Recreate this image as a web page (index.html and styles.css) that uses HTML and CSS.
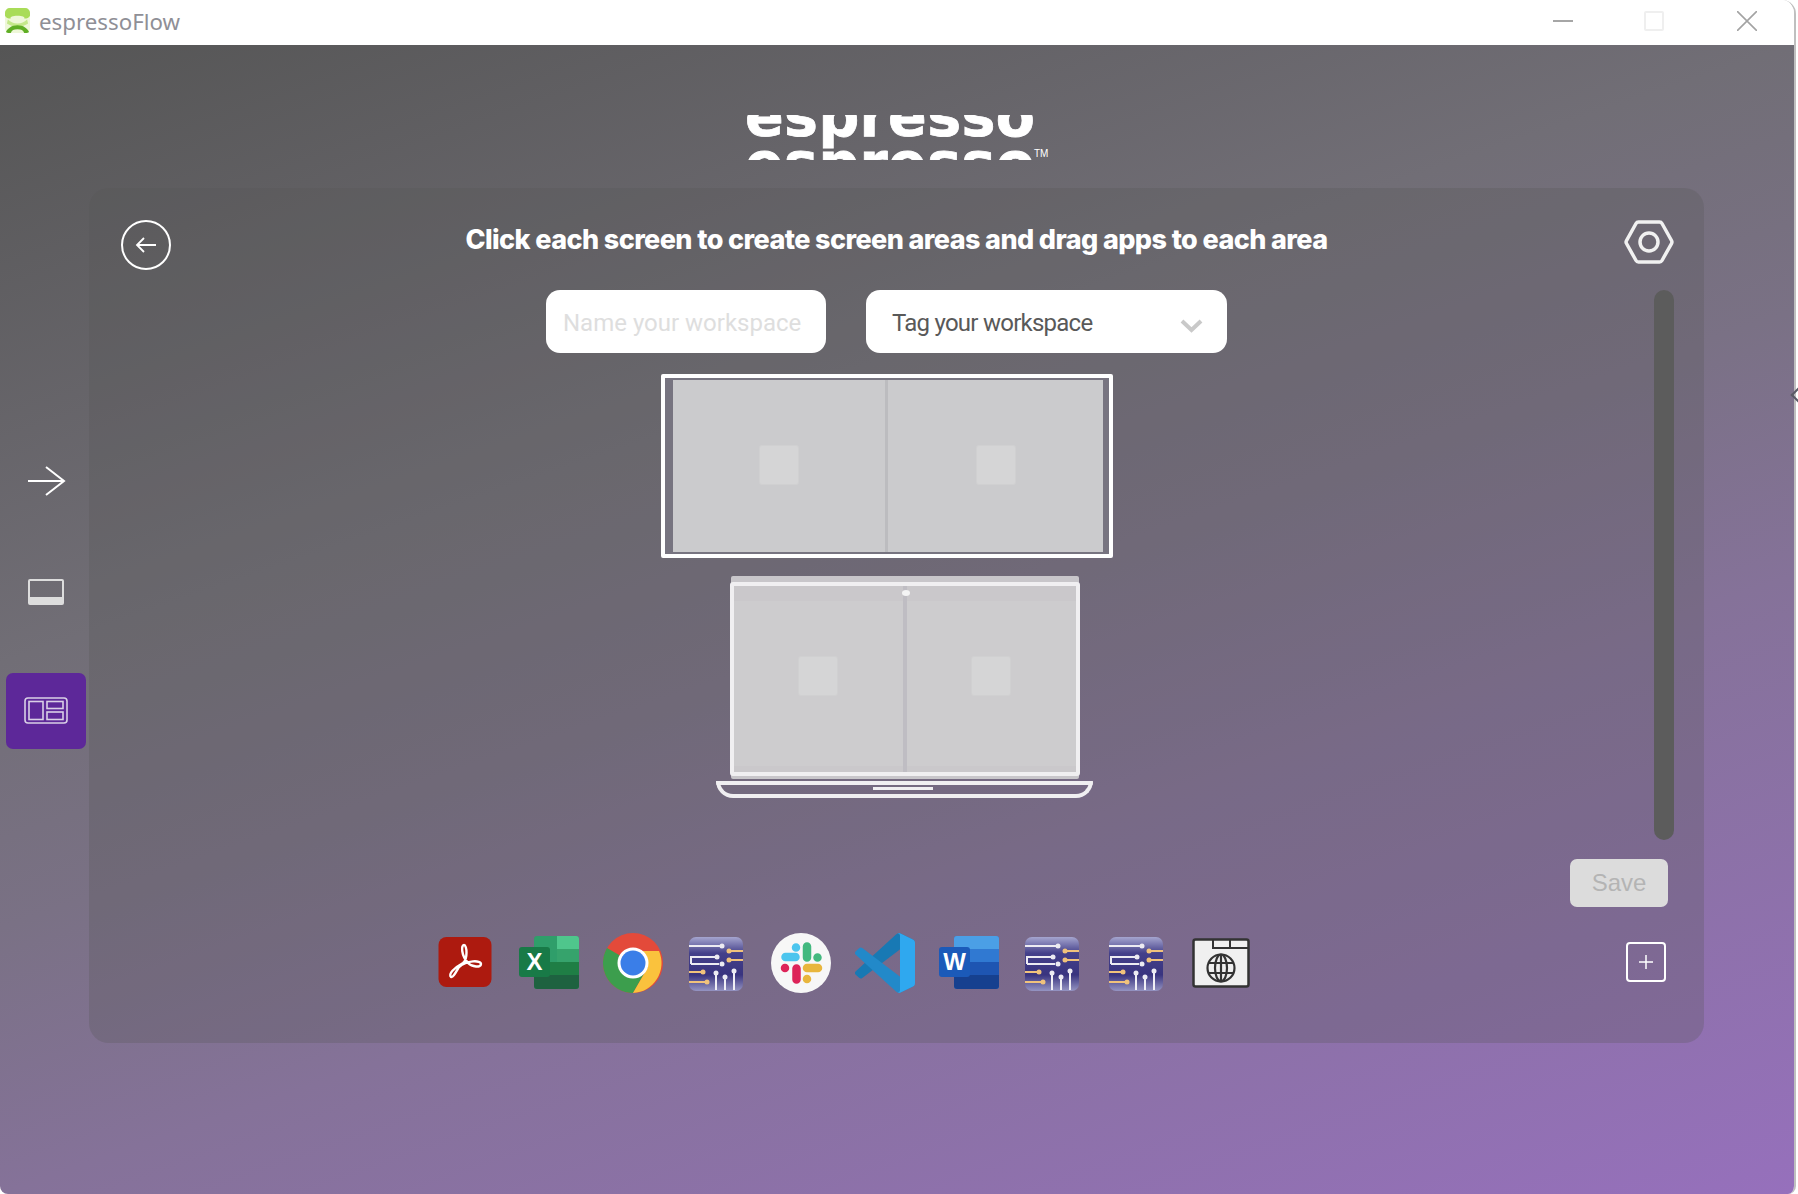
FILE: index.html
```html
<!DOCTYPE html>
<html lang="en">
<head>
  <meta charset="UTF-8">
  <title>espressoFlow</title>
  <link rel="stylesheet" href="styles.css">
</head>
<body>
  <svg class="defs" width="0" height="0">
    <defs>
      <linearGradient id="chipBg" x1="0" y1="0" x2="0" y2="1">
        <stop offset="0" stop-color="#a5a5cf"/>
        <stop offset=".3" stop-color="#44408a"/>
        <stop offset=".7" stop-color="#39347f"/>
        <stop offset="1" stop-color="#9594c2"/>
      </linearGradient>
      <symbol id="chip" viewBox="-1 -3 60 60">
        <rect x="1" y="1" width="54" height="54" rx="7" fill="url(#chipBg)"/>
        <g fill="none" stroke-width="2">
          <path d="M1 10h33M3 28v-7h26M3 28h28" stroke="#ecebf2"/>
          <path d="M41 15h14M41 24h14M1 36h14M1 46h18" stroke="#f0c27c"/>
          <path d="M28 54V37M37 54V41M46 54V35" stroke="#f1f0f5"/>
        </g>
        <g fill="#ecebf2">
          <circle cx="34" cy="10" r="2.500"/><circle cx="29" cy="21" r="2.500"/><circle cx="34" cy="28" r="2.500"/>
          <circle cx="28" cy="37" r="2.500"/><circle cx="37" cy="41" r="2.500"/><circle cx="46" cy="35" r="2.500"/>
        </g>
        <g fill="#f0c27c">
          <circle cx="41" cy="15" r="2.500"/><circle cx="41" cy="24" r="2.500"/><circle cx="15" cy="36" r="2.500"/><circle cx="19" cy="46" r="2.500"/>
        </g>
      </symbol>
    </defs>
  </svg>

  <div class="window">
    <header class="titlebar">
      <div class="app-name">
        <svg class="app-logo" viewBox="0 0 26 26">
          <rect x="0" y="0" width="26" height="26" rx="5" fill="#eef7d8"/>
          <path d="M0 5a5 5 0 0 1 5-5h16a5 5 0 0 1 5 5v3c-1 2-3 3-6 3 1-2-2-3-7-3s-8 1-7 3c-3 0-5-1-6-3z" fill="#a9dc58"/>
          <path d="M3 12c3 3 6 4 10 4s7-1 10-4l1 4c-3 2-6 3-11 3S5 18 2 16z" fill="#c4e88a"/>
          <path d="M1 25c2-4 6-7 12-7s10 3 12 7c-1 1-2 1-3 1h-2c-1-3-3-4-7-4s-6 1-7 4H4c-1 0-2 0-3-1z" fill="#5fae24"/>
        </svg>
        <span>espressoFlow</span>
      </div>
      <div class="win-controls">
        <span class="win-min"></span>
        <span class="win-max"></span>
        <svg class="win-close" viewBox="0 0 20 20"><path d="M0 0l20 20M20 0L0 20" stroke="#a3a3a3" stroke-width="1.600"/></svg>
      </div>
    </header>

    <main class="content">
      <div class="logo">
        <div class="logo-clip"><div class="logo-lines">espresso<br>espresso</div></div>
        <span class="logo-tm">TM</span>
      </div>

      <div class="work-row">
        <nav class="sidebar">
          <button class="side-btn side-arrow">
            <svg width="40" height="30" viewBox="0 0 40 30"><path d="M1 15h36M19 1l18 14-18 14" fill="none" stroke="#fff" stroke-width="2"/></svg>
          </button>
          <button class="side-btn side-screen">
            <svg width="36" height="26" viewBox="0 0 36 26"><rect x="1" y="1" width="34" height="24" rx="1" fill="none" stroke="#ddd" stroke-width="2"/><rect x="1" y="18" width="34" height="7" fill="#ddd"/></svg>
          </button>
          <button class="side-btn side-layout">
            <svg width="44" height="28" viewBox="0 0 44 28"><g fill="none" stroke="#d9cfe6" stroke-width="1.600"><rect x="1" y="1" width="42" height="25" rx="3"/><rect x="5" y="4.500" width="14" height="18"/><rect x="23" y="4.500" width="16" height="7"/><rect x="23" y="15" width="16" height="7.500"/></g></svg>
          </button>
        </nav>

        <section class="panel">
          <div class="panel-head">
            <button class="back-btn">
              <svg width="22" height="16" viewBox="0 0 22 16"><path d="M21 8H2M9 1L2 8l7 7" fill="none" stroke="#fff" stroke-width="1.800"/></svg>
            </button>
            <h1>Click each screen to create screen areas and drag apps to each area</h1>
            <svg class="hex-btn" viewBox="0 0 50 44"><path d="M15 2h20a3 3 0 0 1 3 1.500l9.500 17a3 3 0 0 1 0 3L38 40.500a3 3 0 0 1-3 1.500H15a3 3 0 0 1-3-1.500L2.500 23.500a3 3 0 0 1 0-3L12 3.500A3 3 0 0 1 15 2z" fill="none" stroke="#f1f1f1" stroke-width="3.500"/><circle cx="25" cy="22" r="9" fill="none" stroke="#f1f1f1" stroke-width="3.500"/></svg>
          </div>

          <div class="panel-body">
            <div class="stage">
              <div class="form-row">
                <div class="field field-name">Name your workspace</div>
                <div class="field field-tag">
                  <span>Tag your workspace</span>
                  <svg width="23" height="14" viewBox="0 0 23 14"><path d="M2 2l9.500 9L21 2" fill="none" stroke="#c9c9c9" stroke-width="4"/></svg>
                </div>
              </div>

              <div class="monitor">
                <div class="area"><span class="drop"></span></div>
                <div class="area"><span class="drop"></span></div>
              </div>

              <div class="laptop">
                <div class="lap-screen">
                  <div class="area"><span class="drop"></span></div>
                  <div class="area"><span class="drop"></span></div>
                  <span class="lap-cam"></span>
                </div>
                <div class="lap-base"><span class="lap-notch"></span></div>
              </div>
            </div>
            <div class="scrollbar"></div>
          </div>

          <div class="save-row"><button class="save-btn">Save</button></div>

          <div class="dock">
            <div class="dock-icons">
              <svg class="app" viewBox="0 0 60 60">
                <rect x="3.500" y="4" width="53" height="50" rx="8" fill="#ad1a0f"/>
                <path d="M16 44c-3-3 3-9 12-14 5-4 4-18 1-18s-3 10 4 18c4 4 13 5 13 1s-14-4-22 3c-3 5-6 11-8 10z" fill="none" stroke="#fff" stroke-width="2.400"/>
              </svg>
              <svg class="app" viewBox="0 0 60 56">
                <rect x="15" y="1" width="45" height="53" rx="3" fill="#2f9e6a"/>
                <path d="M38 1h19a3 3 0 0 1 3 3v10H38z" fill="#4fc68c"/>
                <rect x="38" y="14" width="22" height="13" fill="#36a36c"/>
                <rect x="15" y="27" width="45" height="13" fill="#1f7e45"/>
                <path d="M15 40h45v11a3 3 0 0 1-3 3H18a3 3 0 0 1-3-3z" fill="#1e6240"/>
                <rect x="0" y="12" width="31" height="30" rx="3" fill="#187a47"/>
                <text x="15.500" y="35" class="app-letter" text-anchor="middle">X</text>
              </svg>
              <svg class="app" viewBox="0 0 60 60">
                <circle cx="30" cy="30" r="30" fill="#e34a3a"/>
                <path d="M30 30L4 15A30 30 0 0 0 30 60l15-26z" fill="#3c9e4d"/>
                <path d="M30 18h26a30 30 0 0 1-26 42l15-26z" fill="#fac23d"/>
                <circle cx="30" cy="30" r="15.500" fill="#fff"/>
                <circle cx="30" cy="30" r="12.500" fill="#3a7ee8"/>
              </svg>
              <svg class="app"><use href="#chip"/></svg>
              <svg class="app" viewBox="0 0 60 60">
                <circle cx="30" cy="30" r="30" fill="#f7f7f7"/>
                <g stroke-linecap="round" stroke-width="8.500" fill="none">
                  <path d="M14.500 24h10M25 14.500v.1" stroke="#4cc5ee"/>
                  <path d="M36 13.500v11M46.500 24.500v.1" stroke="#43b97f"/>
                  <path d="M36 35h11M36 46v.1" stroke="#e8b63d"/>
                  <path d="M25.500 35.500v11M14 35v.1" stroke="#dd2459"/>
                </g>
              </svg>
              <svg class="app" viewBox="0 0 100 100">
                <path d="M96.500 10.800L75.900.9C73.500-.3 70.600.2 68.800 2.100L1.300 63.600c-1.800 1.600-1.800 4.500 0 6.100l5.500 5c1.500 1.400 3.700 1.500 5.300.2L93.400 13.400c2.700-2.100 6.600-.1 6.600 3.300v-.3c0-2.400-1.400-4.600-3.500-5.600z" fill="#1879b4"/>
                <path d="M96.500 89.200L75.900 99.100c-2.400 1.200-5.300.7-7.100-1.200L1.300 36.400c-1.800-1.600-1.800-4.500 0-6.100l5.500-5c1.500-1.400 3.700-1.500 5.300-.2l81.300 61.500c2.700 2.100 6.600.1 6.600-3.300v.3c0 2.400-1.400 4.600-3.500 5.600z" fill="#2289c9"/>
                <path d="M75.900 99.100c-2.400 1.200-5.300.7-7.100-1.200 2.300 2.300 6.200.7 6.200-2.600V4.700c0-3.300-3.900-4.900-6.200-2.600C70.600.2 73.500-.3 75.900.9l20.600 9.900c2.100 1 3.500 3.200 3.500 5.600v67.200c0 2.400-1.400 4.600-3.500 5.600z" fill="#2fa8ef"/>
              </svg>
              <svg class="app" viewBox="0 0 60 56">
                <rect x="15" y="1" width="45" height="53" rx="3" fill="#3079d2"/>
                <path d="M18 1h39a3 3 0 0 1 3 3v10H15V4a3 3 0 0 1 3-3z" fill="#4b9fe6"/>
                <rect x="15" y="27" width="45" height="13" fill="#1e55b2"/>
                <path d="M15 40h45v11a3 3 0 0 1-3 3H18a3 3 0 0 1-3-3z" fill="#16408f"/>
                <rect x="0" y="12" width="31" height="30" rx="3" fill="#1b5ab9"/>
                <text x="15.500" y="35" class="app-letter" text-anchor="middle">W</text>
              </svg>
              <svg class="app"><use href="#chip"/></svg>
              <svg class="app"><use href="#chip"/></svg>
              <svg class="app" viewBox="0 0 60 60">
                <rect x="2.500" y="6.500" width="55" height="47" rx="2" fill="#f0f0f0" stroke="#333" stroke-width="2.500"/>
                <path d="M22 7v8h17V7M39 15h18" fill="none" stroke="#333" stroke-width="2"/>
                <g fill="none" stroke="#333" stroke-width="2.200">
                  <circle cx="30" cy="35" r="13.500"/><ellipse cx="30" cy="35" rx="6" ry="13.500"/>
                  <path d="M30 21v28M17 30h26M17 40h26"/>
                </g>
              </svg>
            </div>
            <button class="add-btn">
              <svg width="14" height="14" viewBox="0 0 14 14"><path d="M7 0v14M0 7h14" stroke="#fff" stroke-width="1.500"/></svg>
            </button>
          </div>
        </section>
      </div>
    </main>
  </div>
  <span class="edge-chevron"></span>
</body>
</html>
```

FILE: styles.css
```css
* { box-sizing: border-box; }
html, body { margin: 0; height: 100%; background: #fff; overflow: hidden; }
body { font-family: "Liberation Sans", Arial, sans-serif; }
button { border: 0; padding: 0; background: none; font: inherit; }
.defs { position: absolute; }

.window { width: 1796px; height: 1194px; display: flex; flex-direction: column; border-right: 2px solid #bfbfbf; border-radius: 0 14px 8px 8px; overflow: hidden; }

/* title bar */
.titlebar { height: 45px; flex: none; display: flex; justify-content: space-between; align-items: center; background: #fff; }
.app-name { display: flex; align-items: center; gap: 9px; padding-left: 5px; padding-bottom: 2px; }
.app-logo { width: 25px; height: 25px; margin-bottom: 2px; }
.app-name span { font-family: "Noto Sans", "Open Sans", sans-serif; font-size: 22.300px; color: #8f8f96; }
.win-controls { display: flex; align-items: center; padding-right: 37px; margin-bottom: 3px; }
.win-min { width: 20px; height: 2px; background: #a6a6a6; margin-right: 71px; }
.win-max { width: 20px; height: 20px; border: 2px solid #efefef; border-radius: 2px; margin-right: 73px; }
.win-close { width: 20px; height: 20px; }

/* main area */
.content { flex: 1; display: flex; flex-direction: column; background: linear-gradient(161deg, #555 0%, #716e76 35%, #7a7185 50%, #857299 65%, #9670bc 100%); }
.logo { height: 143px; display: flex; justify-content: center; padding-top: 70px; }
.logo-clip { width: 289px; height: 45px; overflow: hidden; }
.logo-lines { margin-top: -22px; font-family: "DejaVu Sans", sans-serif; font-weight: 700; font-size: 57px; line-height: 47px; letter-spacing: .4px; -webkit-text-stroke: .8px #fff; color: #fff; white-space: nowrap; }
.logo-tm { align-self: flex-start; margin-top: 33px; font-size: 10px; color: #fff; width: 15px; }

.work-row { display: flex; align-items: flex-start; }

.sidebar { width: 89px; flex: none; display: flex; flex-direction: column; align-items: flex-start; padding: 273px 0 0 6px; }
.side-btn { display: flex; align-items: center; justify-content: center; width: 80px; }
.side-arrow { height: 40px; margin-bottom: 71px; padding-left: 1px; }
.side-screen { height: 40px; margin-bottom: 61px; }
.side-layout { height: 76px; background: #5d2899; border-radius: 7px; }

.panel { width: 1615px; height: 855px; background: rgba(85, 85, 85, .28); border-radius: 20px; display: flex; flex-direction: column; }

.panel-head { height: 102px; flex: none; display: flex; align-items: flex-start; padding: 32px 30px 0 32px; }
.back-btn { width: 50px; height: 50px; flex: none; border: 2px solid #fff; border-radius: 50%; display: flex; align-items: center; justify-content: center; }
h1 { flex: 1; margin: -4px 0 0 0; font-family: Inter, sans-serif; font-weight: 800; font-size: 27px; line-height: 48px; letter-spacing: -.6px; color: #fff; text-align: center; padding-right: 2px; white-space: nowrap; }
.hex-btn { width: 50px; height: 44px; flex: none; }

.panel-body { height: 550px; flex: none; display: flex; justify-content: space-between; padding-right: 30px; }
.stage { width: 1260px; display: flex; flex-direction: column; }
.form-row { display: flex; gap: 40px; padding-left: 457px; }
.field { height: 63px; padding-top: 2px; background: #fff; border-radius: 14px; display: flex; align-items: center; font-family: Roboto, sans-serif; font-size: 24px; }
.field-name { width: 280px; padding-left: 17px; color: #dedede; }
.field-tag { width: 361px; padding-right: 24px; padding-left: 26px; color: #595959; letter-spacing: -.75px; justify-content: space-between; }
.field-tag svg { margin-top: 6px; }

.monitor { width: 452px; height: 184px; margin: 21px 0 0 572px; border: 4px solid #fff; border-radius: 2px; padding: 2px 6px 2px 8px; display: flex; background: #777480; }
.monitor .area:first-child { flex: none; width: 212px; }
.monitor .area + .area { flex: 1; border-left: 3px solid #bcbcbf; }
.monitor .drop { margin-bottom: 2px; }
.area { background: #cbcbcd; display: flex; align-items: center; justify-content: center; }
.drop { width: 38px; height: 38px; background: #d5d5d6; border-radius: 2px; box-shadow: 0 0 0 1px #d0d0d1; }

.laptop { width: 377px; margin: 18px 0 0 627px; display: flex; flex-direction: column; align-items: center; }
.lap-screen { position: relative; width: 350px; height: 194px; margin-top: 6px; display: flex; border: 4px solid #f0eff1; border-radius: 3px; box-shadow: 0 -7px 0 -1px #c8c6ca, 0 4px 0 -1px #c8c6ca; background: #cdcccf; }
.lap-screen .area { flex: 1; background: #cdccce; box-shadow: inset 0 15px 0 #cac8cb, inset 0 -6px 0 #cac8cb; }
.lap-screen .area + .area { border-left: 4px solid #bfbdc3; }
.lap-screen .drop { margin-bottom: 7px; }
.lap-cam { position: absolute; left: 168px; top: 4px; width: 8px; height: 6px; background: #f4f4f4; border-radius: 50%; }
.lap-base { position: relative; width: 377px; height: 17px; margin-top: 5px; border: 4px solid #f0eff1; border-radius: 0 0 18px 18px; }
.lap-notch { position: absolute; left: 153px; top: 2px; width: 60px; height: 3px; background: #f0eff1; }

.scrollbar { width: 20px; height: 550px; background: #5c5c5c; border-radius: 10px; }

.save-row { height: 68px; flex: none; display: flex; justify-content: flex-end; padding: 19px 36px 0 0; }
.save-btn { width: 98px; height: 48px; background: #dcdcdc; border-radius: 7px; font-size: 24px; color: #b4b4b4; }

.dock { display: flex; align-items: flex-start; padding: 25px 38px 0 346px; justify-content: space-between; }
.dock-icons { display: flex; align-items: center; gap: 24px; }
.app { width: 60px; height: 60px; flex: none; }
.app-letter { font-family: "Liberation Sans", sans-serif; font-weight: 700; font-size: 24px; fill: #fff; }
.add-btn { width: 40px; height: 40px; margin-top: 9px; border: 2px solid #fff; border-radius: 4px; display: flex; align-items: center; justify-content: center; }

.edge-chevron { position: absolute; left: 1793px; top: 389px; width: 12px; height: 12px; border-left: 2px solid #5a5a66; border-bottom: 2px solid #5a5a66; transform: rotate(45deg); }
```
